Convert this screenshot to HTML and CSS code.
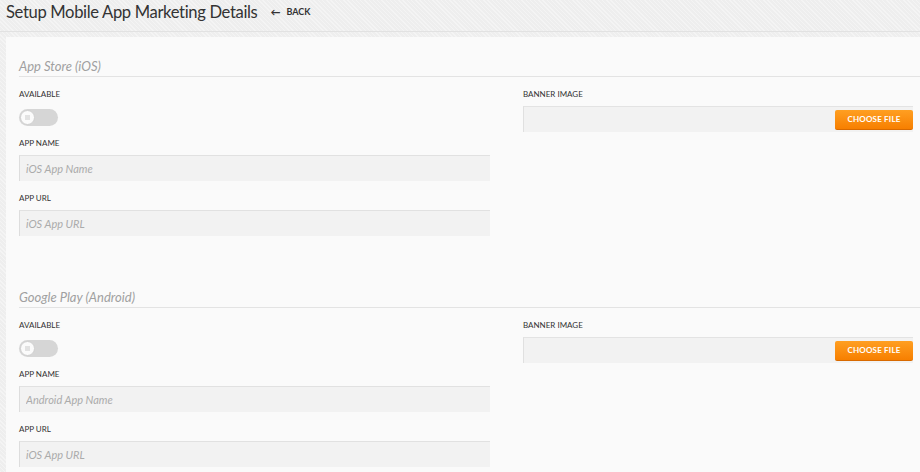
FILE: index.html
```html
<!DOCTYPE html>
<html>
<head>
<meta charset="utf-8">
<link rel="stylesheet" href="styles.css">
</head>
<body>
<header class="page-header">
  <h1 class="page-title">Setup Mobile App Marketing Details</h1>
  <a class="back-link" href="#"><span class="back-arrow">&#8592;</span>BACK</a>
</header>
<main class="panel">
  <section class="store">
    <h2 class="store-title">App Store (iOS)</h2>
    <div class="store-grid">
      <div class="col-left">
        <div class="field">
          <label class="label">AVAILABLE</label>
          <span class="toggle"><span class="knob"></span></span>
        </div>
        <div class="field">
          <label class="label">APP NAME</label>
          <input class="text-input" type="text" placeholder="iOS App Name">
        </div>
        <div class="field">
          <label class="label">APP URL</label>
          <input class="text-input" type="text" placeholder="iOS App URL">
        </div>
      </div>
      <div class="col-right">
        <div class="field">
          <label class="label">BANNER IMAGE</label>
          <div class="file-box"><button class="choose-btn" type="button">CHOOSE FILE</button></div>
        </div>
      </div>
    </div>
  </section>
  <section class="store store-second">
    <h2 class="store-title">Google Play (Android)</h2>
    <div class="store-grid">
      <div class="col-left">
        <div class="field">
          <label class="label">AVAILABLE</label>
          <span class="toggle"><span class="knob"></span></span>
        </div>
        <div class="field">
          <label class="label">APP NAME</label>
          <input class="text-input" type="text" placeholder="Android App Name">
        </div>
        <div class="field">
          <label class="label">APP URL</label>
          <input class="text-input" type="text" placeholder="iOS App URL">
        </div>
      </div>
      <div class="col-right">
        <div class="field">
          <label class="label">BANNER IMAGE</label>
          <div class="file-box"><button class="choose-btn" type="button">CHOOSE FILE</button></div>
        </div>
      </div>
    </div>
  </section>
</main>
</body>
</html>
```
FILE: styles.css
```css
* { box-sizing: border-box; }
html, body { margin: 0; padding: 0; }
body {
  width: 920px;
  height: 472px;
  overflow: hidden;
  font-family: "Lato", "Open Sans", sans-serif;
  color: #333;
  background-color: #eeeeee;
  background-image: repeating-linear-gradient(45deg, rgba(255,255,255,0.35) 0 1px, transparent 1px 3px);
}
.page-header {
  display: flex;
  align-items: center;
  height: 32px;
  padding: 0 0 8px 6px;
  border-bottom: 1px solid #e2e2e2;
}
.page-title {
  margin: 0;
  font-size: 16.6px;
  font-weight: 400;
  color: #333;
  letter-spacing: -0.35px;
}
.back-link {
  margin-left: 13px;
  font-size: 9px;
  font-weight: 700;
  color: #333;
  text-decoration: none;
  display: flex;
  align-items: center;
}
.back-arrow {
  font-size: 10px;
  margin-right: 6px;
}
.panel {
  margin: 5px 0 0 6px;
  background: #fafafa;
  padding: 19px 0 0 13px;
  height: 440px;
}
.store-title {
  margin: 0;
  height: 21px;
  line-height: 20px;
  font-size: 13px;
  font-weight: 400;
  font-style: italic;
  color: #a0a0a0;
  border-bottom: 1px solid #e3e3e3;
}
.store-second { margin-top: 51px; }
.store-grid {
  display: grid;
  grid-template-columns: 471px 390px;
  column-gap: 33px;
  padding-top: 11px;
}
.field { display: flex; flex-direction: column; align-items: flex-start; }
.field + .field { margin-top: 11px; }
.label {
  font-size: 8px;
  line-height: 12px;
  height: 12px;
  font-weight: 400;
  color: #333;
  margin-bottom: 6px;
}
.toggle {
  display: block;
  width: 39px;
  height: 17px;
  margin-top: 3px;
  border-radius: 9px;
  background: #d6d6d6;
  position: relative;
}
.knob {
  position: absolute;
  left: 1px;
  top: 1px;
  width: 15px;
  height: 15px;
  border-radius: 50%;
  background: #fbfbfb;
  border: 1px solid #cfcfcf;
}
.knob::after {
  content: "";
  position: absolute;
  left: 4px;
  top: 4px;
  width: 5px;
  height: 5px;
  background: #e2e2e2;
}
.text-input {
  width: 471px;
  height: 26px;
  margin: 0;
  padding: 0 0 0 6px;
  background: #f2f2f2;
  border: 0;
  border-top: 1px solid #e1e1e1;
  border-left: 1px solid #dddddd;
  font-family: inherit;
  font-size: 11px;
  font-style: italic;
  color: #555;
  outline: none;
}
.text-input::placeholder { color: #ababab; font-style: italic; }
.file-box {
  width: 390px;
  height: 26px;
  background: #f2f2f2;
  border-top: 1px solid #e3e3e3;
  border-left: 1px solid #e0e0e0;
  display: flex;
  justify-content: flex-end;
  align-items: center;
}
.choose-btn {
  width: 78px;
  height: 20px;
  border: 0;
  border-bottom: 1px solid #d86a00;
  border-radius: 2px;
  background: linear-gradient(#ff9f22, #f77f00);
  color: #fff;
  font-family: inherit;
  font-size: 8px;
  font-weight: 700;
  letter-spacing: 0.2px;
  padding: 0;
  cursor: pointer;
}
```
